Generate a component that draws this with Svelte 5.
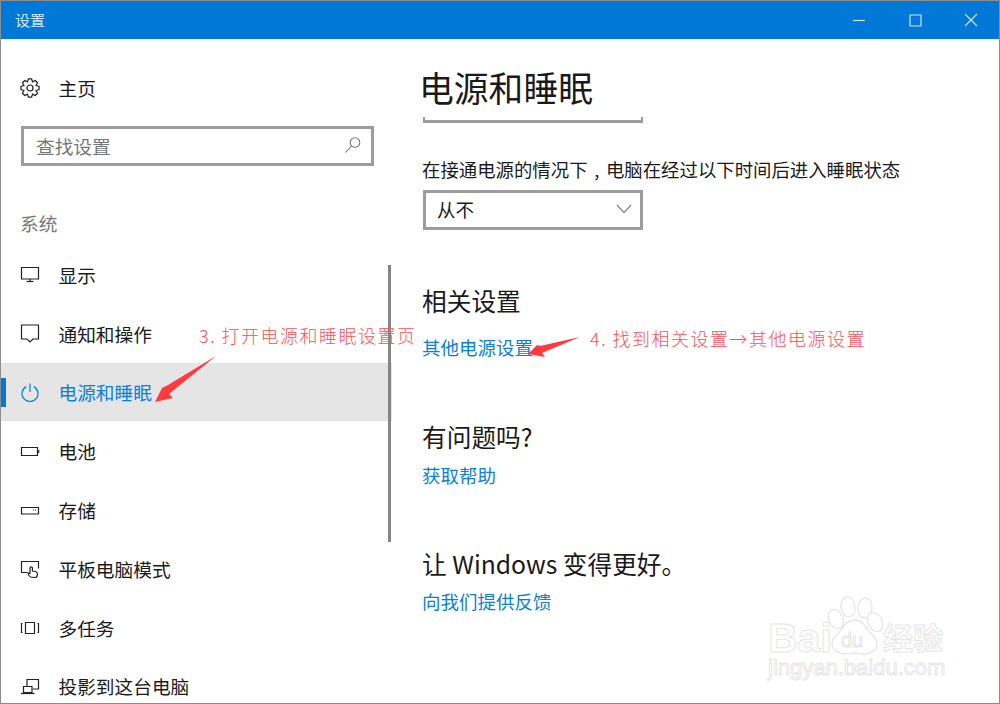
<script>
  const items = [
    { label: "显示", paths: ["M1.5 3.5h17v11.5h-17z", "M10 15v2", "M6.5 17.5h7"] },
    { label: "通知和操作", paths: ["M1.5 2h17v14h-5.5l-3 3-3-3h-5.5z"] },
    { label: "电源和睡眠", active: true, paths: ["M6.2 4.6a8 8 0 1 0 7.6 0", "M10 1.5v8.5"] },
    { label: "电池", paths: ["M1.5 6.5h16v8h-16z", "M18.7 9v3"] },
    { label: "存储", paths: ["M1.5 7.5h17v6.5h-17z", "M13 10h1", "M15 10h1"] },
    { label: "平板电脑模式", paths: ["M7.5 14.5h-6v-11h17v7", "M10.5 19c-1.5-1-2.5-3-2.5-4l2 .5v-5.5a1.2 1.2 0 0 1 2.4 0v3l3 .5c1.5 .3 2 1 2 2.5 0 2-1 3.5-2 3.5z"] },
    { label: "多任务", paths: ["M5.5 5.5h9v11h-9z", "M2.5 6.5h-1v9h1", "M17.5 6.5h1v9h-1"] },
    { label: "投影到这台电脑", paths: ["M7 10v-6.5h11.5v9.5h-5.5", "M3.5 10.5h8.5v6h-8.5z", "M1 17.5h13.5"] }
  ];

  function gearPath(cx, cy, outer, inner, teeth) {
    const step = (Math.PI * 2) / teeth;
    let d = "";
    for (let i = 0; i < teeth; i++) {
      const a = i * step;
      const pts = [
        [inner, a - step * 0.5],
        [outer, a - step * 0.22],
        [outer, a + step * 0.22]
      ];
      for (const [r, t] of pts) {
        d += (d ? "L" : "M") + (cx + r * Math.cos(t)).toFixed(2) + " " + (cy + r * Math.sin(t)).toFixed(2);
      }
    }
    return d + "Z";
  }

  const gear = gearPath(10, 10, 9.2, 6.6, 8);
</script>

<div class="window">
  <header class="titlebar">
    <span class="title">设置</span>
    <div class="controls">
      <svg width="14" height="14" viewBox="0 0 14 14"><path d="M1 7.5h12" /></svg>
      <svg width="14" height="14" viewBox="0 0 14 14"><path d="M2 2h11v11h-11z" /></svg>
      <svg width="14" height="14" viewBox="0 0 14 14"><path d="M1 1l12 12M13 1l-12 12" /></svg>
    </div>
  </header>

  <div class="body">
    <aside class="sidebar">
      <div class="home">
        <svg class="icon" width="20" height="20" viewBox="0 0 20 20">
          <path d={gear} />
          <circle cx="10" cy="10" r="3" />
        </svg>
        <span>主页</span>
      </div>

      <div class="search">
        <span>查找设置</span>
        <svg width="18" height="18" viewBox="0 0 18 18">
          <circle cx="11" cy="6.5" r="4.8" />
          <path d="M7.5 10l-6 6.5" />
        </svg>
      </div>

      <div class="group">系统</div>

      <nav>
        {#each items as item}
          <div class="item" class:active={item.active}>
            <svg class="icon" width="20" height="20" viewBox="0 0 20 20">
              {#each item.paths as d}
                <path {d} />
              {/each}
            </svg>
            <span>{item.label}</span>
          </div>
        {/each}
      </nav>

      <div class="scrollbar"></div>
    </aside>

    <main>
      <h1>电源和睡眠</h1>
      <div class="rule"></div>
      <p>在接通电源的情况下<span class="comma">,</span>电脑在经过以下时间后进入睡眠状态</p>
      <div class="select">
        <span>从不</span>
        <svg width="16" height="10" viewBox="0 0 16 10"><path d="M1 1l7 7.5 7-7.5" /></svg>
      </div>

      <h2 class="related">相关设置</h2>
      <a href="#power" class="link-related">其他电源设置</a>

      <h2 class="question">有问题吗?</h2>
      <a href="#help" class="link-help">获取帮助</a>

      <h2 class="better">让 Windows 变得更好。</h2>
      <a href="#feedback">向我们提供反馈</a>
    </main>
  </div>

  <div class="note note-3">3. 打开电源和睡眠设置页</div>
  <div class="note note-4">4. 找到相关设置→其他电源设置</div>

  <svg class="overlay" width="1000" height="704" viewBox="0 0 1000 704">
    <polygon class="arrow" points="216,356 168,385 162,388 155,402 173,398 169,394" />
    <polygon class="arrow" points="580,337 540,346 537,345 528,354 545,357 542,353" />

    <g class="mark">
      <ellipse cx="836" cy="619" rx="7" ry="10" transform="rotate(-25 836 619)" />
      <ellipse cx="848" cy="607" rx="7" ry="10" transform="rotate(-8 848 607)" />
      <ellipse cx="865" cy="608" rx="7" ry="10" transform="rotate(8 865 608)" />
      <ellipse cx="875" cy="622" rx="7" ry="10" transform="rotate(-25 875 622)" />
      <path d="M855 620c6 0 10 5 13 10 4 5 9 8 9 13 0 7-6 11-13 11-4 0-6-1-9-1-3 0-5 1-9 1-7 0-14-4-14-11 0-5 5-8 9-13 3-5 8-10 14-10z" />
      <text x="768" y="652" font-size="41" class="mark-bold">Bai</text>
      <text x="841" y="647" font-size="20">du</text>
      <text x="883" y="649" font-size="30" class="mark-cjk">经验</text>
      <text x="768" y="675" font-size="22">jingyan.baidu.com</text>
    </g>
  </svg>
</div>

<style>
  :global(body) {
    margin: 0;
    background: #fff;
  }

  .window {
    position: relative;
    box-sizing: border-box;
    width: 1000px;
    height: 704px;
    overflow: hidden;
    border: 1px solid #8c8c8c;
    background: #fff;
    color: #1a1a1a;
    font-family: "Noto Sans CJK SC", "Noto Sans", sans-serif;
  }

  .titlebar {
    display: flex;
    align-items: center;
    justify-content: space-between;
    height: 38px;
    background: #0078d7;
    color: #d4e8f8;
  }

  .title {
    margin: -2px 0 0 14px;
    font-size: 15px;
  }

  .controls {
    display: flex;
    gap: 42px;
    margin-right: 21px;
  }

  .controls svg {
    fill: none;
    stroke: #cfe4f6;
    stroke-width: 1.2;
  }

  .body {
    display: flex;
    height: 664px;
  }

  .sidebar {
    position: relative;
    flex: none;
    width: 391px;
  }

  .icon {
    flex: none;
    fill: none;
    stroke: #222;
    stroke-width: 1.2;
  }

  .home,
  .item {
    display: flex;
    align-items: center;
    gap: 18.5px;
    padding-left: 19px;
    font-size: 18.7px;
  }

  .home {
    height: 59px;
    margin-top: 19px;
  }

  .search {
    display: flex;
    align-items: center;
    justify-content: space-between;
    box-sizing: border-box;
    width: 353px;
    height: 40px;
    margin: 9px 0 0 20px;
    padding: 0 9px 2px 12px;
    border: 3px solid #9c9c9c;
    color: #777;
    font-size: 18.7px;
  }

  .search svg {
    fill: none;
    stroke: #777;
    stroke-width: 1.1;
  }

  .group {
    margin: 45px 0 10px 19px;
    color: #777;
    font-size: 18.7px;
    line-height: 24px;
  }

  .item {
    position: relative;
    height: 58.8px;
  }

  .item.active {
    background: #e5e5e5;
    color: #0a7fdc;
  }

  .item.active::before {
    content: "";
    position: absolute;
    left: 0;
    top: 15px;
    width: 5px;
    height: 29px;
    background: #0078d7;
  }

  .item.active .icon {
    stroke: #0a7fdc;
  }

  .scrollbar {
    position: absolute;
    top: 226px;
    right: 1px;
    width: 3px;
    height: 277px;
    background: #858585;
  }

  main {
    flex: 1;
    padding: 23px 0 0 30px;
  }

  h1 {
    margin: 0 0 0 -3px;
    font-size: 34.8px;
    font-weight: 400;
    line-height: 50px;
  }

  .rule {
    box-sizing: border-box;
    width: 220px;
    height: 6px;
    margin: 5px 0 0 1px;
    border: 2px solid #9c9c9c;
    border-top: 0;
    border-bottom-width: 3px;
  }

  p {
    margin: 33px 0 0;
    font-size: 18.4px;
    line-height: 26px;
  }

  .comma {
    display: inline-block;
    width: 1em;
    text-align: center;
  }

  .select {
    display: flex;
    align-items: center;
    justify-content: space-between;
    box-sizing: border-box;
    width: 220px;
    height: 40px;
    margin: 8px 0 0 1px;
    padding: 0 8px 2px 11px;
    border: 3px solid #9c9c9c;
    font-size: 18.5px;
  }

  .select svg {
    fill: none;
    stroke: #888;
    stroke-width: 1.2;
  }

  h2 {
    margin: 0;
    font-size: 24.7px;
    font-weight: 400;
    line-height: 32px;
  }

  .related {
    margin-top: 54px;
  }

  .question {
    margin-top: 60px;
  }

  .better {
    margin-top: 59px;
  }

  a {
    display: block;
    margin-top: 9px;
    color: #0a7fdc;
    font-size: 18.5px;
    line-height: 26px;
    text-decoration: none;
  }

  .link-related {
    margin-top: 18px;
  }

  .link-help {
    margin-top: 10px;
  }

  .note {
    position: absolute;
    color: #ff5055;
    font-size: 18px;
    font-weight: 300;
    letter-spacing: 1.5px;
    line-height: 24px;
    white-space: nowrap;
  }

  .note-3 {
    left: 198px;
    top: 322px;
  }

  .note-4 {
    left: 589px;
    top: 325px;
  }

  .overlay {
    position: absolute;
    left: -1px;
    top: -1px;
    pointer-events: none;
  }

  .arrow {
    fill: #ff3b3f;
  }

  .mark {
    fill: #fff;
    stroke: #e6e6e6;
    stroke-width: 1.3;
    font-family: "Liberation Sans", sans-serif;
  }

  .mark text {
    stroke-width: 1;
  }

  .mark-bold {
    font-weight: 700;
  }

  .mark-cjk {
    font-family: "Noto Sans CJK SC", sans-serif;
    font-weight: 700;
  }
</style>
